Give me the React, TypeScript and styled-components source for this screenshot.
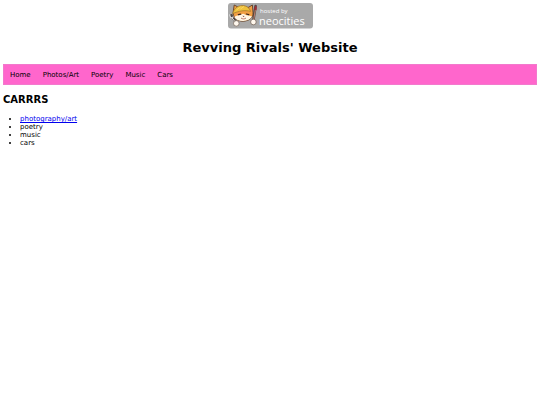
import React from "react";
import styled, { createGlobalStyle } from "styled-components";

const GlobalStyle = createGlobalStyle`
  body {
    margin: 0;
    background: #ffffff;
    color: #000000;
    font-family: "DejaVu Sans", Verdana, sans-serif;
    font-size: 7px;
    line-height: 8px;
  }
`;

const Page = styled.div`
  padding: 3px;
`;

const Header = styled.header`
  display: flex;
  flex-direction: column;
  align-items: center;
`;

const BadgeLink = styled.a`
  display: block;
  height: 26px;
`;

const Title = styled.h1`
  margin: 11px 0 8px;
  font-size: 13px;
  line-height: 16px;
  font-weight: bold;
`;

const NavList = styled.ul`
  display: flex;
  margin: 0;
  padding: 0;
  list-style: none;
  background: #ff66cc;
  border: 1px solid #f279cc;
`;

const NavLink = styled.a`
  display: block;
  padding: 6px 6px 5px;
  line-height: 8px;
  color: #000000;
  text-decoration: none;
`;

const SectionTitle = styled.h2`
  margin: 9px 0;
  font-size: 10px;
  line-height: 12px;
  font-weight: bold;
`;

const TopicList = styled.ul`
  margin: 0;
  padding-left: 17px;
  list-style: disc;
`;

const TopicLink = styled.a`
  color: #0000ee;
`;

const navItems = ["Home", "Photos/Art", "Poetry", "Music", "Cars"];

function NeocitiesBadge() {
  return (
    <svg width="85" height="26" viewBox="0 0 85 26" role="img" aria-label="Hosted by Neocities">
      <rect width="85" height="25.5" rx="3" fill="#a9a9a9" />
      <g stroke="#4d4744" strokeLinecap="round" fill="none">
        <path d="M3.5 12.5 9 20.5" strokeWidth="3" />
        <path d="M27.6 3 25.4 17" strokeWidth="2.6" />
      </g>
      <path d="M1.6 11.5l1 3.3 2.4-.2.6-3.1M3.8 14.5 8 20" stroke="#e4e4e4" strokeWidth="1" fill="none" />
      <path d="M27.3 7 25.6 17" stroke="#b57c69" strokeWidth="1.2" />
      <path d="M26.6 7c-.6-2 .4-3.4 1.2-4.8 1 1.4 1.2 3.4.6 5Z" fill="#a52b35" />
      <path d="M5.3 8.2 6.2 2l4.5 2.4c3-1.5 6.5-1.4 9.3.2L24.4 2l.6 7.5c.6 4.8-3.6 8.5-9.8 8.7C8.8 18.4 4.3 14 5.3 8.2Z" fill="#f2a044" stroke="#5d3d28" strokeWidth=".9" />
      <path d="M6.3 14c2-2 4.6-1.3 7-2.6 1.4-.8 2.4-.7 3.6.2 2.3 1.4 4.8.8 7.2 2-1.6 2.8-4.8 4.2-8.8 4.3C11 18 7.8 16.6 6.3 14Z" fill="#fff6e6" />
      <path d="M4.6 10.6C6.2 5.8 9 2.7 14 2.5c4.7-.1 7.5 2.5 8.6 5.9C16.5 6.8 11.2 8 4.6 10.6Z" fill="#eec13d" stroke="#9d742b" strokeWidth=".7" />
      <path d="M8.4 7.1 12.6 4M12.5 6 16 3.5" stroke="#fbdc70" strokeWidth=".8" />
      <path d="M10.3 11.7l2.4-.6M18.4 11l2.4.6" stroke="#3b251e" strokeWidth="1.2" strokeLinecap="round" />
      <path d="m14.4 12.8 2.2.1-1.1 1.1Z" fill="#6e3830" />
      <path d="M13 15c1.5 1.2 3.5 1.2 5 0" stroke="#ad5945" strokeWidth=".8" fill="none" />
      <circle cx="8.3" cy="20.4" r="2.8" fill="#fff8ee" stroke="#6d5b50" strokeWidth=".7" />
      <circle cx="25.4" cy="19" r="2.8" fill="#fff8ee" stroke="#6d5b50" strokeWidth=".7" />
      <g fill="#ffffff" fontFamily='"Open Sans", "Noto Sans", sans-serif'>
        <text x="32" y="10" fontSize="6">hosted by</text>
        <text x="31" y="22" fontSize="11">neocities</text>
      </g>
    </svg>
  );
}

export default function App() {
  return (
    <>
      <GlobalStyle />
      <Page>
        <Header>
          <BadgeLink href="#neocities">
            <NeocitiesBadge />
          </BadgeLink>
          <Title>Revving Rivals' Website</Title>
        </Header>
        <nav>
          <NavList>
            {navItems.map((item) => (
              <li key={item}>
                <NavLink href="#">{item}</NavLink>
              </li>
            ))}
          </NavList>
        </nav>
        <main>
          <SectionTitle>CARRRS</SectionTitle>
          <TopicList>
            <li>
              <TopicLink href="#photography">photography/art</TopicLink>
            </li>
            <li>poetry</li>
            <li>music</li>
            <li>cars</li>
          </TopicList>
        </main>
      </Page>
    </>
  );
}
